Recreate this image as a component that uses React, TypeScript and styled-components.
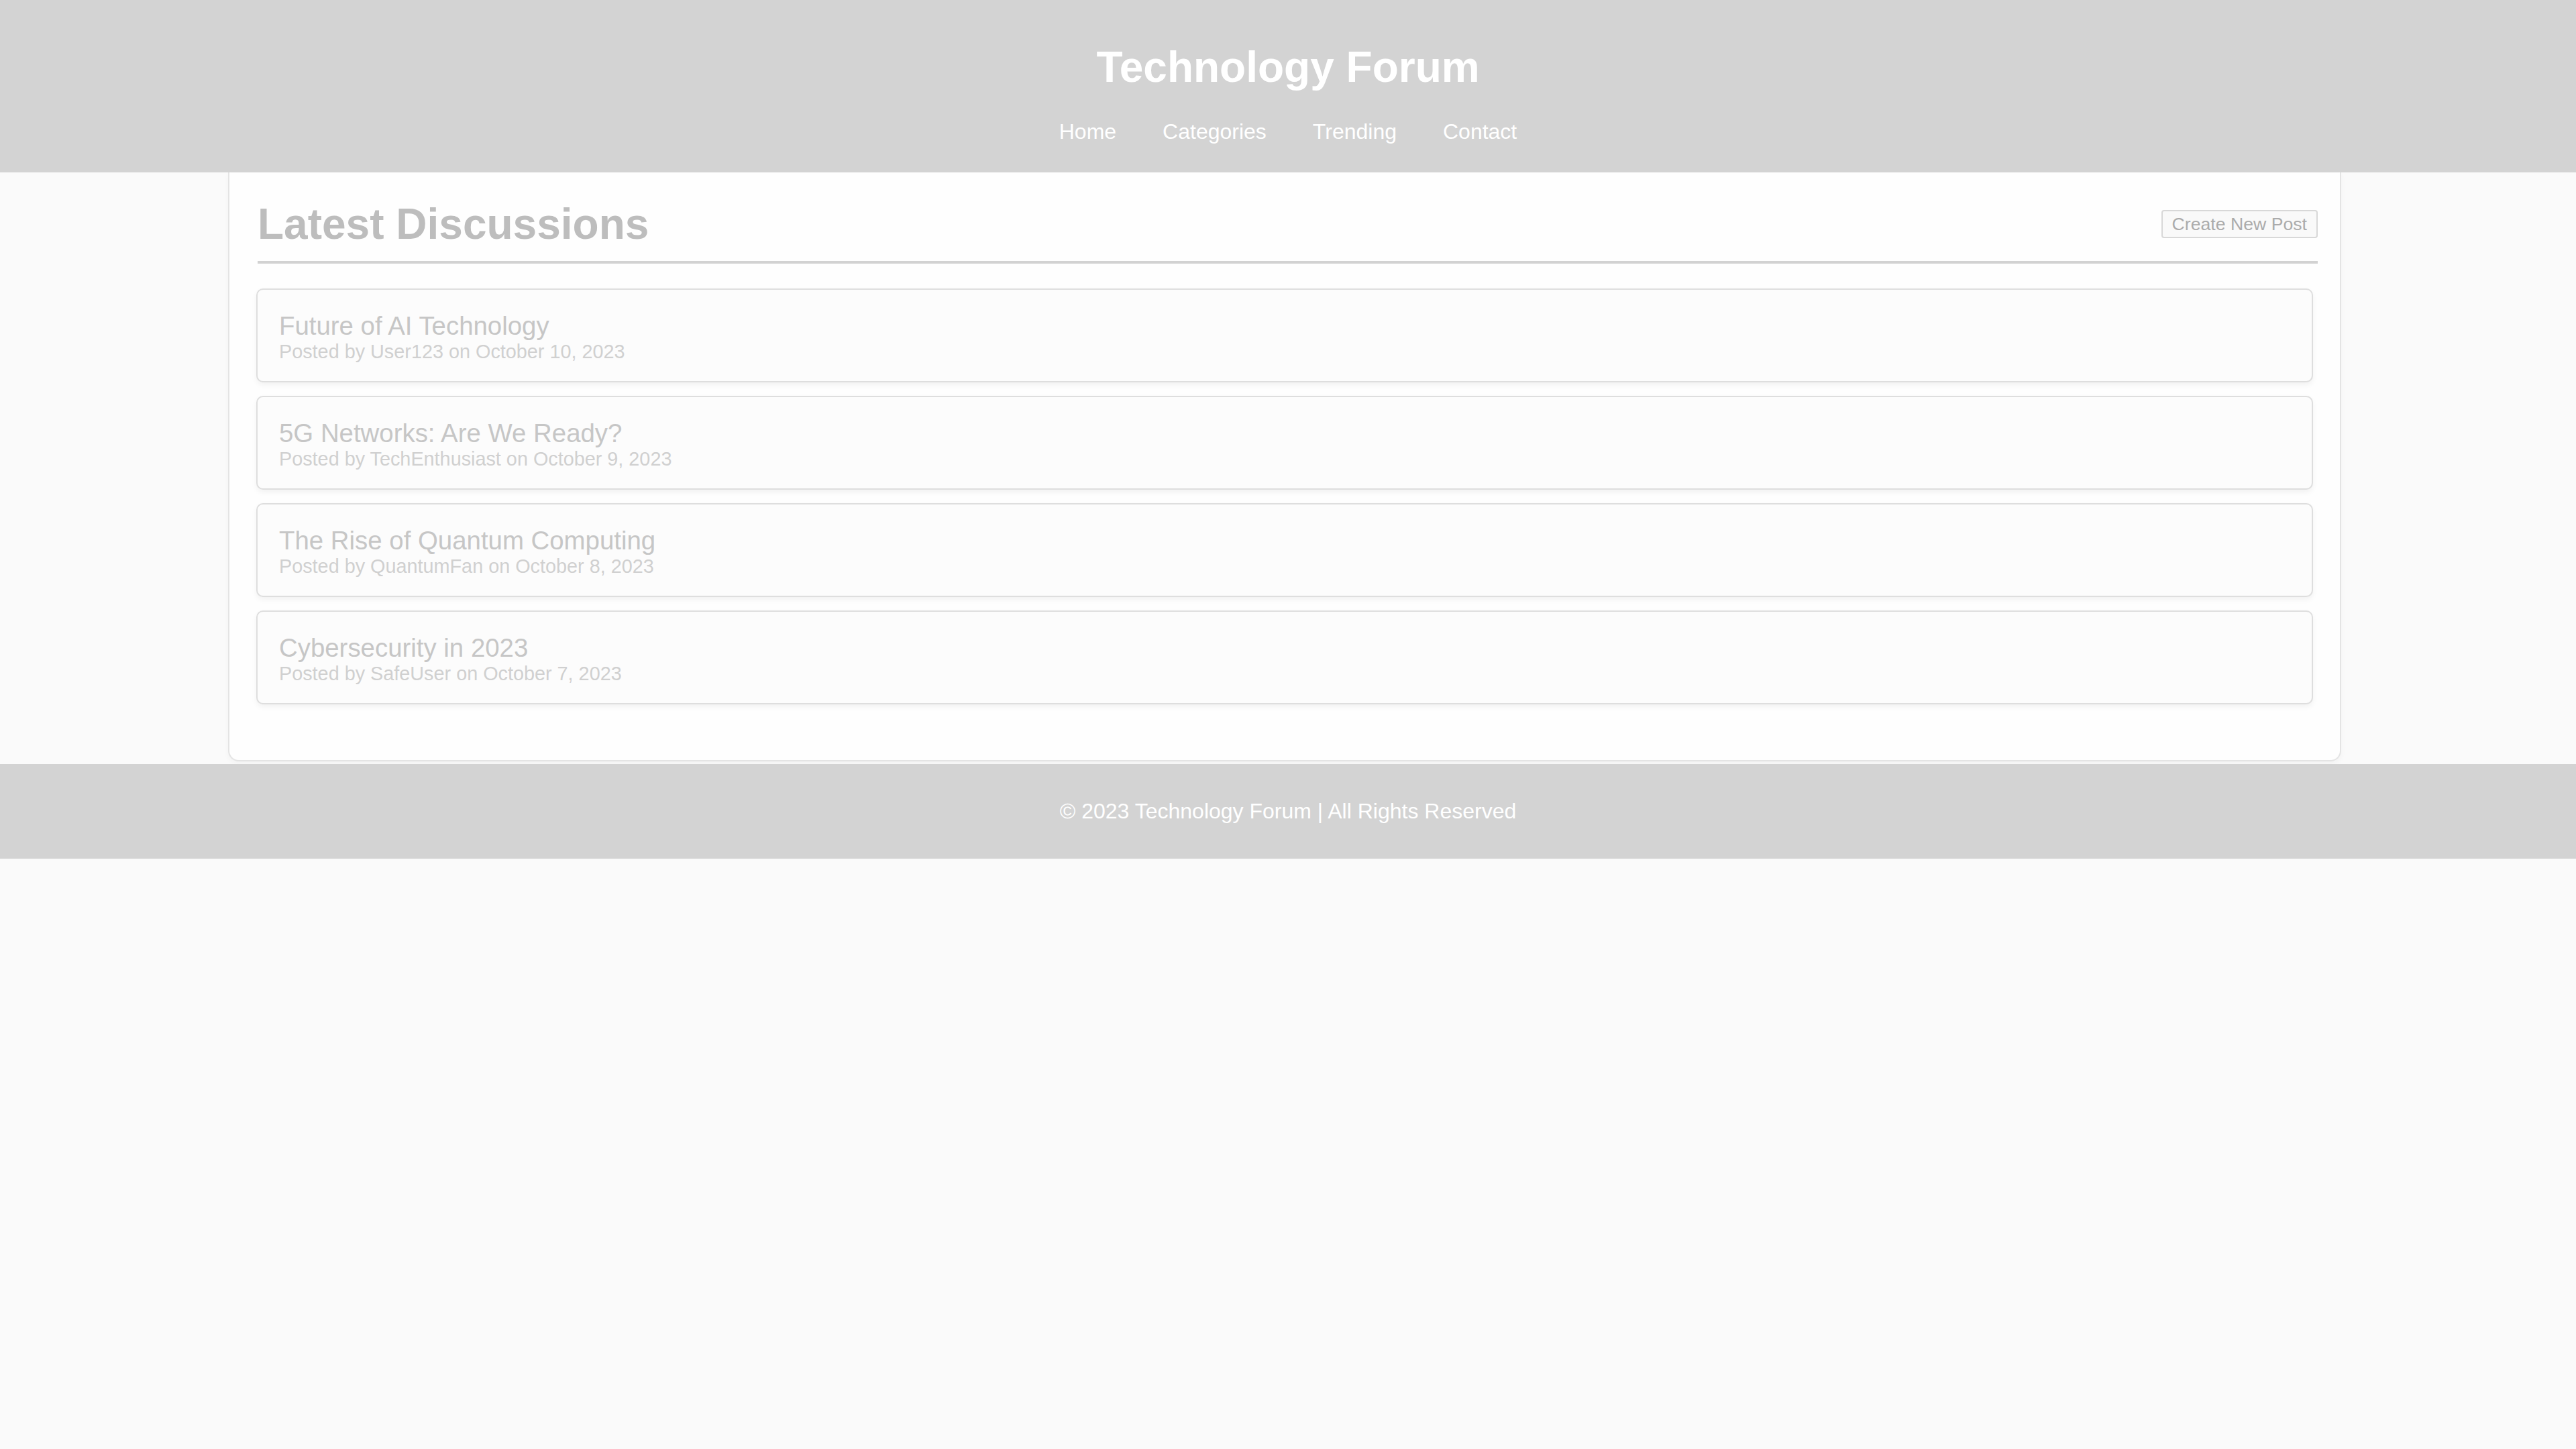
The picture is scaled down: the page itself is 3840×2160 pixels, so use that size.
import React from 'react';
import styled, { createGlobalStyle } from 'styled-components';

const GlobalStyle = createGlobalStyle`
  html, body {
    margin: 0;
    padding: 0;
    background-color: #fafafa;
    font-family: "Liberation Sans", Arial, sans-serif;
  }
`;

// Header
const Header = styled.header`
  background-color: #d3d3d3;
  padding: 63px 0 42px;
  text-align: center;
`;

const SiteTitle = styled.h1`
  margin: 0 0 41px;
  font-size: 64px;
  line-height: 74px;
  font-weight: bold;
  color: #fff;
`;

const Nav = styled.nav`
  display: flex;
  justify-content: center;
  gap: 69px;
`;

const NavLink = styled.a`
  font-size: 32px;
  line-height: 37px;
  color: #fff;
  text-decoration: none;
`;

// Main content
const Container = styled.main`
  box-sizing: border-box;
  width: 3150px;
  margin: 0 0 0 340px;
  padding: 40px 40px 83px;
  background-color: #fefefe;
  border: 2px solid #e4e4e4;
  border-top: none;
  border-radius: 0 0 16px 16px;
  box-shadow: 0 4px 8px rgba(0, 0, 0, 0.03);
`;

const SectionHeader = styled.div`
  display: flex;
  justify-content: space-between;
  align-items: center;
  margin: 0 -7px 37px 2px;
  padding-bottom: 18px;
  border-bottom: 4px solid #d2d2d2;
`;

const SectionTitle = styled.h2`
  margin: 0;
  font-size: 64px;
  line-height: 74px;
  font-weight: bold;
  color: #bdbdbd;
`;

const NewPostButton = styled.button`
  font-family: "Liberation Sans", Arial, sans-serif;
  font-size: 26.67px;
  line-height: 30px;
  padding: 4px 14px;
  color: #ababab;
  background-color: #f9f9f9;
  border: 2px solid #d8d8d8;
  border-radius: 4px;
  cursor: pointer;
`;

const PostList = styled.div`
  display: flex;
  flex-direction: column;
  gap: 20px;
`;

const PostCard = styled.article`
  background-color: #fcfcfc;
  border: 2px solid #dedede;
  border-radius: 10px;
  padding: 32px 32px 27px;
  box-shadow: 0 4px 8px rgba(0, 0, 0, 0.05);
`;

const PostTitle = styled.h3`
  margin: 0;
  font-size: 38.4px;
  line-height: 44px;
  font-weight: normal;
  color: #c6c6c6;
`;

const PostMeta = styled.p`
  margin: 0;
  font-size: 28.8px;
  line-height: 33px;
  color: #d0d0d0;
`;

// Footer
const Footer = styled.footer`
  margin-top: 4px;
  background-color: #d3d3d3;
  padding: 52px 0;
  text-align: center;
`;

const FooterText = styled.p`
  margin: 0;
  font-size: 32px;
  line-height: 37px;
  color: #fff;
`;

const posts = [
  { id: 1, title: 'Future of AI Technology', author: 'User123', date: 'October 10, 2023' },
  { id: 2, title: '5G Networks: Are We Ready?', author: 'TechEnthusiast', date: 'October 9, 2023' },
  { id: 3, title: 'The Rise of Quantum Computing', author: 'QuantumFan', date: 'October 8, 2023' },
  { id: 4, title: 'Cybersecurity in 2023', author: 'SafeUser', date: 'October 7, 2023' },
];

const navItems = ['Home', 'Categories', 'Trending', 'Contact'];

export default function App() {
  return (
    <>
      <GlobalStyle />
      <Header>
        <SiteTitle>Technology Forum</SiteTitle>
        <Nav>
          {navItems.map((item) => (
            <NavLink key={item} href="#">
              {item}
            </NavLink>
          ))}
        </Nav>
      </Header>

      <Container>
        <SectionHeader>
          <SectionTitle>Latest Discussions</SectionTitle>
          <NewPostButton>Create New Post</NewPostButton>
        </SectionHeader>
        <PostList>
          {posts.map((post) => (
            <PostCard key={post.id}>
              <PostTitle>{post.title}</PostTitle>
              <PostMeta>
                Posted by {post.author} on {post.date}
              </PostMeta>
            </PostCard>
          ))}
        </PostList>
      </Container>

      <Footer>
        <FooterText>© 2023 Technology Forum | All Rights Reserved</FooterText>
      </Footer>
    </>
  );
}
